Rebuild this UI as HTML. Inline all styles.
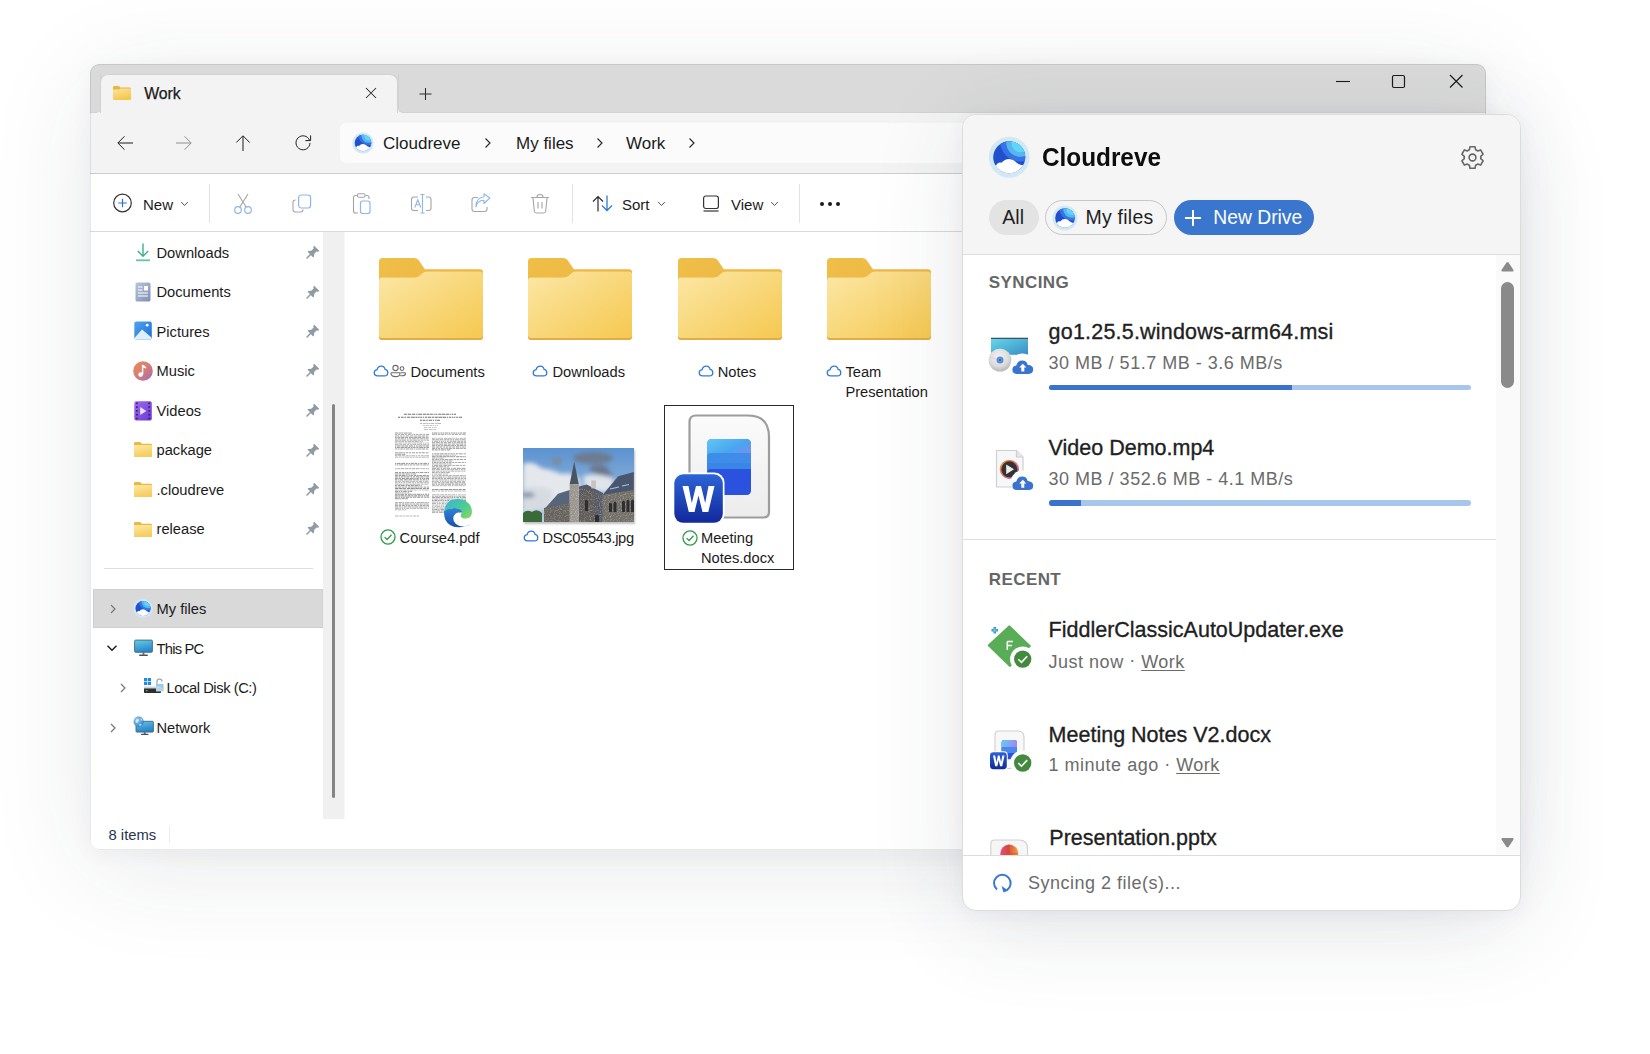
<!DOCTYPE html>
<html><head><meta charset="utf-8">
<style>
*{box-sizing:border-box;margin:0;padding:0}
html,body{width:1650px;height:1054px;overflow:hidden;background:#fff;font-family:"Liberation Sans",sans-serif;color:#1a1a1a}
.abs{position:absolute}
#win{position:absolute;left:90px;top:64px;width:1396px;height:786px;border-radius:9px;background:#fff;overflow:hidden;
 box-shadow:0 18px 105px rgba(40,50,70,0.105),0 3px 22px rgba(40,50,70,0.045)}
#titlebar{position:absolute;left:0;top:0;width:100%;height:49px;background:#f3f3f3}
#tb1{position:absolute;left:0;top:0;width:100%;height:24px;background:#dadada}
#tb2{position:absolute;left:0;top:10px;width:11px;height:39px;background:#dadada;border-bottom-right-radius:5px;border-right:1px solid #d2d2d2;border-bottom:1px solid #d2d2d2}
#tb3{position:absolute;left:307.5px;top:10px;width:1088.5px;height:39px;background:#dadada;border-bottom-left-radius:5px;border-left:1px solid #d2d2d2;border-bottom:1px solid #d2d2d2}
#tab{position:absolute;left:10px;top:10px;width:298px;height:50px;background:#f3f3f3;border-radius:8px 8px 0 0;border:1px solid #d2d2d2;border-bottom:none}
#tabfill{position:absolute;left:11px;top:40px;width:296px;height:20px;background:#f3f3f3}
#navrow{position:absolute;left:0;top:49px;width:100%;height:61px;background:#f3f3f3;border-bottom:1px solid #cdcdcd}
#addr{position:absolute;left:250px;top:10px;width:900px;height:40px;background:#fbfbfb;border-radius:6px}
#cmd{position:absolute;left:0;top:110px;width:100%;height:58px;background:#fff;border-bottom:1px solid #d9d9d9}
#side{position:absolute;left:0;top:168px;width:253px;height:588px;background:#fff}
#content{position:absolute;left:253px;top:168px;width:1142px;height:588px;background:#fff}
#status{position:absolute;left:0;top:756px;width:100%;height:30px;background:#fff}
#panel{position:absolute;left:962px;top:114px;width:559px;height:797px;border-radius:14px;background:#fff;overflow:hidden;
 border:1px solid #dcdcdc;box-shadow:0 14px 95px rgba(40,50,70,0.12),0 2px 18px rgba(40,50,70,0.05)}
.t{position:absolute;white-space:nowrap}
</style></head><body>
<div id="win">
  <div id="titlebar"></div><div id="tb1"></div><div id="tb2"></div><div id="tb3"></div>
  <div id="tab"></div><div id="tabfill"></div>
  <div id="navrow"><div id="addr"></div></div>
  <div id="cmd"></div>
  <div id="side"></div>
  <div id="content"></div>
  <div id="status"></div>
  <div style="position:absolute;left:0;top:0;right:0;bottom:0;border:1px solid rgba(0,0,0,0.085);border-radius:9px"></div>
</div>

<div id="ov" style="position:absolute;left:0;top:0;width:1650px;height:1054px">
<!-- tab -->
<svg class="abs" style="left:112px;top:85px" width="20" height="16" viewBox="0 0 20 16"><defs><linearGradient id="gtabf" x1="0" y1="0" x2="0.4" y2="1"><stop offset="0" stop-color="#fbe5a0"/><stop offset="1" stop-color="#f4c84f"/></linearGradient></defs>
 <path d="M1 2.4 Q1 1 2.4 1 H6.4 Q7.2 1 7.8 1.8 L8.4 2.6 H17.6 Q19 2.6 19 4 V13.6 Q19 15 17.6 15 H2.4 Q1 15 1 13.6 Z" fill="#ebb63c"/>
 <path d="M1 5.6 Q1 4.4 2.2 4.4 H6.8 Q7.6 4.4 8.3 3.7 L8.6 3.4 H17.8 Q19 3.4 19 4.6 V13.6 Q19 15 17.6 15 H2.4 Q1 15 1 13.6 Z" fill="url(#gtabf)"/>
</svg>
<div class="t" style="left:144.2px;top:86.4px;font-size:15.8px;line-height:15.8px;color:#1b1b1b;-webkit-text-stroke:0.25px #1b1b1b">Work</div>
<svg class="abs" style="left:364.3px;top:86.2px" width="14" height="14" viewBox="0 0 14 14"><path d="M2 2 L12 12 M12 2 L2 12" stroke="#2b2b2b" stroke-width="1.05"/></svg>
<svg class="abs" style="left:418.2px;top:87.2px" width="15" height="14" viewBox="0 0 15 14"><path d="M7.5 1 V13 M1.5 7 H13.5" stroke="#2b2b2b" stroke-width="1.05"/></svg>
<!-- window controls -->
<svg class="abs" style="left:1334.5px;top:73.5px" width="16" height="16" viewBox="0 0 16 16"><path d="M1 7.5 H15" stroke="#1b1b1b" stroke-width="1.1"/></svg>
<svg class="abs" style="left:1390px;top:73.2px" width="16" height="16" viewBox="0 0 16 16"><rect x="2.5" y="2.5" width="12" height="12" rx="1.5" fill="none" stroke="#1b1b1b" stroke-width="1.2"/></svg>
<svg class="abs" style="left:1448px;top:73.3px" width="16" height="16" viewBox="0 0 16 16"><path d="M2 2 L14.5 14.5 M14.5 2 L2 14.5" stroke="#1b1b1b" stroke-width="1.2"/></svg>
<!-- nav -->
<svg class="abs" style="left:114.5px;top:132.5px" width="20" height="20" viewBox="0 0 20 20"><path d="M18 10 H3 M9.5 3.3 L2.8 10 L9.5 16.7" fill="none" stroke="#1e1e1e" stroke-width="1.0"/></svg>
<svg class="abs" style="left:174px;top:132.5px" width="20" height="20" viewBox="0 0 20 20"><path d="M2 10 H17 M10.5 3.3 L17.2 10 L10.5 16.7" fill="none" stroke="#8e8e8e" stroke-width="1.0"/></svg>
<svg class="abs" style="left:232.5px;top:132.5px" width="20" height="20" viewBox="0 0 20 20"><path d="M10 18 V3 M3.3 9.5 L10 2.8 L16.7 9.5" fill="none" stroke="#1e1e1e" stroke-width="1.0"/></svg>
<svg class="abs" style="left:292.5px;top:132.3px" width="20" height="20" viewBox="0 0 20 20"><path d="M16.5 8.2 A7 7 0 1 0 17 11" fill="none" stroke="#1e1e1e" stroke-width="1.0"/><path d="M17.6 3.4 V8.6 H12.4" fill="none" stroke="#1e1e1e" stroke-width="1.0"/></svg>
<!-- address -->
<svg class="abs" style="left:352px;top:132px" width="22" height="22" viewBox="0 0 22 22" id="logoaddr"><use href="#cdlogo"/></svg>
<div class="t" style="left:383px;top:135px;font-size:17px;line-height:17px;color:#1b1b1b">Cloudreve</div>
<svg class="abs" style="left:482px;top:136px" width="12" height="14" viewBox="0 0 12 14"><path d="M3.5 2.5 L8 7 L3.5 11.5" fill="none" stroke="#2b2b2b" stroke-width="1.2"/></svg>
<div class="t" style="left:516px;top:135px;font-size:17px;line-height:17px;color:#1b1b1b">My files</div>
<svg class="abs" style="left:594px;top:136px" width="12" height="14" viewBox="0 0 12 14"><path d="M3.5 2.5 L8 7 L3.5 11.5" fill="none" stroke="#2b2b2b" stroke-width="1.2"/></svg>
<div class="t" style="left:626px;top:135px;font-size:17px;line-height:17px;color:#1b1b1b">Work</div>
<svg class="abs" style="left:686px;top:136px" width="12" height="14" viewBox="0 0 12 14"><path d="M3.5 2.5 L8 7 L3.5 11.5" fill="none" stroke="#2b2b2b" stroke-width="1.2"/></svg>
<!-- command bar -->
<svg class="abs" style="left:112px;top:193px" width="21" height="21" viewBox="0 0 21 21"><circle cx="10.5" cy="10" r="8.8" fill="none" stroke="#333" stroke-width="1.2"/><path d="M10.5 5.8 V14.2 M6.3 10 H14.7" stroke="#2f6fd0" stroke-width="1.2"/></svg>
<div class="t" style="left:143px;top:197px;font-size:15px;line-height:15px;color:#1b1b1b">New</div>
<svg class="abs" style="left:180px;top:200px" width="9" height="8" viewBox="0 0 9 8"><path d="M1.2 2 L4.5 5.5 L7.8 2" fill="none" stroke="#555" stroke-width="1"/></svg>
<div class="abs" style="left:209px;top:184px;width:1px;height:39px;background:#e3e3e3"></div>
<!-- scissors -->
<svg class="abs" style="left:232px;top:192px" width="22" height="23" viewBox="0 0 22 23"><path d="M6 2 L14.5 15.5 M16 2 L7.5 15.5" stroke="#a5a5a5" stroke-width="1.1" fill="none"/><circle cx="6" cy="18" r="3.3" fill="none" stroke="#8fb6e8" stroke-width="1.2"/><circle cx="16" cy="18" r="3.3" fill="none" stroke="#8fb6e8" stroke-width="1.2"/></svg>
<!-- copy -->
<svg class="abs" style="left:291px;top:193px" width="22" height="21" viewBox="0 0 22 21"><path d="M4.5 7 Q2 7 2 9.5 V16.5 Q2 19 4.5 19 H9.5 Q12 19 12 16.5" fill="none" stroke="#a5a5a5" stroke-width="1.1"/><rect x="7.6" y="2" width="12" height="13" rx="2.8" fill="none" stroke="#8fb6e8" stroke-width="1.2"/></svg>
<!-- paste -->
<svg class="abs" style="left:351px;top:192px" width="22" height="23" viewBox="0 0 22 23"><path d="M6 3.5 H4.5 Q2.5 3.5 2.5 5.5 V19 Q2.5 21 4.5 21 H7" fill="none" stroke="#a5a5a5" stroke-width="1.1"/><path d="M14.5 3.5 H16 Q18 3.5 18 5.5 V7" fill="none" stroke="#a5a5a5" stroke-width="1.1"/><rect x="6.5" y="1.8" width="7.5" height="3.4" rx="1.2" fill="none" stroke="#a5a5a5" stroke-width="1.1"/><rect x="9.5" y="9" width="9.5" height="12.5" rx="2.2" fill="none" stroke="#8fb6e8" stroke-width="1.2"/></svg>
<!-- rename -->
<svg class="abs" style="left:410px;top:192px" width="23" height="23" viewBox="0 0 23 23"><path d="M8 5 H4 Q1.5 5 1.5 7.5 V16 Q1.5 18.5 4 18.5 H8 M16 5 H18.5 Q21 5 21 7.5 V16 Q21 18.5 18.5 18.5 H16" fill="none" stroke="#a5a5a5" stroke-width="1.1"/><path d="M4.8 15.5 L7.8 7.8 L10.8 15.5 M5.8 12.8 H9.8" fill="none" stroke="#8fb6e8" stroke-width="1.1"/><path d="M12.5 2.5 V21 M10.5 2.5 H14.5 M10.5 21 H14.5" fill="none" stroke="#8fb6e8" stroke-width="1.1"/></svg>
<!-- share -->
<svg class="abs" style="left:470px;top:192px" width="22" height="22" viewBox="0 0 22 22"><path d="M8 5.5 H4.5 Q2 5.5 2 8 V17 Q2 19.5 4.5 19.5 H14.5 Q17 19.5 17 17 V15" fill="none" stroke="#a5a5a5" stroke-width="1.1"/><path d="M6 15 Q7 8.5 14 8.3 V11.5 L19.8 6 L14 1.8 V4.8 Q6 5.5 6 15 Z" fill="none" stroke="#8fb6e8" stroke-width="1.1" stroke-linejoin="round"/></svg>
<!-- trash -->
<svg class="abs" style="left:529px;top:192px" width="22" height="23" viewBox="0 0 22 23"><path d="M2 5.5 H20 M8 5 Q8 2.5 11 2.5 Q14 2.5 14 5 M4 6 L5.3 19 Q5.6 21 7.5 21 H14.5 Q16.4 21 16.7 19 L18 6 M9 10 V16.5 M13 10 V16.5" fill="none" stroke="#a5a5a5" stroke-width="1.1"/></svg>
<div class="abs" style="left:572px;top:184px;width:1px;height:39px;background:#e3e3e3"></div>
<!-- sort -->
<svg class="abs" style="left:591px;top:194px" width="23" height="19" viewBox="0 0 23 19"><path d="M7 17.5 V2.5 M2 7.5 L7 2.5 L12 7.5" fill="none" stroke="#2b2b2b" stroke-width="1.2"/><path d="M16 1.5 V16.5 M11 11.5 L16 16.5 L21 11.5" fill="none" stroke="#2f78d8" stroke-width="1.3"/></svg>
<div class="t" style="left:622px;top:197px;font-size:15px;line-height:15px;color:#1b1b1b">Sort</div>
<svg class="abs" style="left:657px;top:200px" width="9" height="8" viewBox="0 0 9 8"><path d="M1.2 2 L4.5 5.5 L7.8 2" fill="none" stroke="#555" stroke-width="1"/></svg>
<!-- view -->
<svg class="abs" style="left:702px;top:194px" width="18" height="19" viewBox="0 0 18 19"><rect x="1.6" y="2" width="14.8" height="12.5" rx="2.2" fill="none" stroke="#333" stroke-width="1.2"/><path d="M1.5 17 H16.5" stroke="#333" stroke-width="1.2"/></svg>
<div class="t" style="left:731px;top:197px;font-size:15px;line-height:15px;color:#1b1b1b">View</div>
<svg class="abs" style="left:770px;top:200px" width="9" height="8" viewBox="0 0 9 8"><path d="M1.2 2 L4.5 5.5 L7.8 2" fill="none" stroke="#555" stroke-width="1"/></svg>
<div class="abs" style="left:799px;top:184px;width:1px;height:39px;background:#e3e3e3"></div>
<svg class="abs" style="left:818px;top:198px" width="24" height="12" viewBox="0 0 24 12"><circle cx="4" cy="6" r="2" fill="#1b1b1b"/><circle cx="12" cy="6" r="2" fill="#1b1b1b"/><circle cx="20" cy="6" r="2" fill="#1b1b1b"/></svg>
<!-- sidebar -->
<div class="t" style="left:156.5px;top:245.6px;font-size:14.7px;line-height:14.7px;color:#1b1b1b;">Downloads</div>
<svg class="abs" style="left:306px;top:245px" width="14" height="14" viewBox="0 0 14 14"><path d="M8.2 0.8 L13.2 5.8 L12.3 6.7 L10.6 6.4 L8.3 8.7 L7.9 11.7 L7.2 12.4 L1.6 6.8 L2.3 6.1 L5.3 5.7 L7.6 3.4 L7.3 1.7 Z" fill="#8f9aa3"/><path d="M4.5 9.5 L1 13" stroke="#8f9aa3" stroke-width="1.5" stroke-linecap="round"/></svg>
<div class="t" style="left:156.5px;top:285.1px;font-size:14.7px;line-height:14.7px;color:#1b1b1b;">Documents</div>
<svg class="abs" style="left:306px;top:285px" width="14" height="14" viewBox="0 0 14 14"><path d="M8.2 0.8 L13.2 5.8 L12.3 6.7 L10.6 6.4 L8.3 8.7 L7.9 11.7 L7.2 12.4 L1.6 6.8 L2.3 6.1 L5.3 5.7 L7.6 3.4 L7.3 1.7 Z" fill="#8f9aa3"/><path d="M4.5 9.5 L1 13" stroke="#8f9aa3" stroke-width="1.5" stroke-linecap="round"/></svg>
<div class="t" style="left:156.5px;top:324.6px;font-size:14.7px;line-height:14.7px;color:#1b1b1b;">Pictures</div>
<svg class="abs" style="left:306px;top:324px" width="14" height="14" viewBox="0 0 14 14"><path d="M8.2 0.8 L13.2 5.8 L12.3 6.7 L10.6 6.4 L8.3 8.7 L7.9 11.7 L7.2 12.4 L1.6 6.8 L2.3 6.1 L5.3 5.7 L7.6 3.4 L7.3 1.7 Z" fill="#8f9aa3"/><path d="M4.5 9.5 L1 13" stroke="#8f9aa3" stroke-width="1.5" stroke-linecap="round"/></svg>
<div class="t" style="left:156.5px;top:364.1px;font-size:14.7px;line-height:14.7px;color:#1b1b1b;">Music</div>
<svg class="abs" style="left:306px;top:363px" width="14" height="14" viewBox="0 0 14 14"><path d="M8.2 0.8 L13.2 5.8 L12.3 6.7 L10.6 6.4 L8.3 8.7 L7.9 11.7 L7.2 12.4 L1.6 6.8 L2.3 6.1 L5.3 5.7 L7.6 3.4 L7.3 1.7 Z" fill="#8f9aa3"/><path d="M4.5 9.5 L1 13" stroke="#8f9aa3" stroke-width="1.5" stroke-linecap="round"/></svg>
<div class="t" style="left:156.5px;top:403.6px;font-size:14.7px;line-height:14.7px;color:#1b1b1b;">Videos</div>
<svg class="abs" style="left:306px;top:403px" width="14" height="14" viewBox="0 0 14 14"><path d="M8.2 0.8 L13.2 5.8 L12.3 6.7 L10.6 6.4 L8.3 8.7 L7.9 11.7 L7.2 12.4 L1.6 6.8 L2.3 6.1 L5.3 5.7 L7.6 3.4 L7.3 1.7 Z" fill="#8f9aa3"/><path d="M4.5 9.5 L1 13" stroke="#8f9aa3" stroke-width="1.5" stroke-linecap="round"/></svg>
<div class="t" style="left:156.5px;top:443.1px;font-size:14.7px;line-height:14.7px;color:#1b1b1b;">package</div>
<svg class="abs" style="left:306px;top:443px" width="14" height="14" viewBox="0 0 14 14"><path d="M8.2 0.8 L13.2 5.8 L12.3 6.7 L10.6 6.4 L8.3 8.7 L7.9 11.7 L7.2 12.4 L1.6 6.8 L2.3 6.1 L5.3 5.7 L7.6 3.4 L7.3 1.7 Z" fill="#8f9aa3"/><path d="M4.5 9.5 L1 13" stroke="#8f9aa3" stroke-width="1.5" stroke-linecap="round"/></svg>
<div class="t" style="left:156.5px;top:482.6px;font-size:14.7px;line-height:14.7px;color:#1b1b1b;">.cloudreve</div>
<svg class="abs" style="left:306px;top:482px" width="14" height="14" viewBox="0 0 14 14"><path d="M8.2 0.8 L13.2 5.8 L12.3 6.7 L10.6 6.4 L8.3 8.7 L7.9 11.7 L7.2 12.4 L1.6 6.8 L2.3 6.1 L5.3 5.7 L7.6 3.4 L7.3 1.7 Z" fill="#8f9aa3"/><path d="M4.5 9.5 L1 13" stroke="#8f9aa3" stroke-width="1.5" stroke-linecap="round"/></svg>
<div class="t" style="left:156.5px;top:522.1px;font-size:14.7px;line-height:14.7px;color:#1b1b1b;">release</div>
<svg class="abs" style="left:306px;top:521px" width="14" height="14" viewBox="0 0 14 14"><path d="M8.2 0.8 L13.2 5.8 L12.3 6.7 L10.6 6.4 L8.3 8.7 L7.9 11.7 L7.2 12.4 L1.6 6.8 L2.3 6.1 L5.3 5.7 L7.6 3.4 L7.3 1.7 Z" fill="#8f9aa3"/><path d="M4.5 9.5 L1 13" stroke="#8f9aa3" stroke-width="1.5" stroke-linecap="round"/></svg>
<svg class="abs" style="left:134px;top:242px" width="18" height="20" viewBox="0 0 18 20"><path d="M9 1.5 V14 M3.8 9 L9 14.2 L14.2 9" fill="none" stroke="#3fae8c" stroke-width="1.4"/><path d="M2 18.3 H16" stroke="#66c3a4" stroke-width="1.8"/></svg>
<svg class="abs" style="left:135px;top:282px" width="16" height="20" viewBox="0 0 16 20"><defs><linearGradient id="gdoc" x1="0" y1="0" x2="1" y2="1"><stop offset="0" stop-color="#b9c5dd"/><stop offset="1" stop-color="#7d8fb3"/></linearGradient></defs><rect x="0.5" y="0.5" width="15" height="19" rx="1.6" fill="url(#gdoc)"/><path d="M3 5 H7.5 M3 8 H7.5 M3 11 H13 M3 14 H13" stroke="#fff" stroke-width="1.2"/><rect x="9" y="4" width="4" height="4.5" fill="#fff"/></svg>
<svg class="abs" style="left:134px;top:321px" width="18" height="19" viewBox="0 0 18 19"><defs><linearGradient id="gpic" x1="0" y1="0" x2="1" y2="1"><stop offset="0" stop-color="#53a6ee"/><stop offset="1" stop-color="#1c6ad6"/></linearGradient></defs><rect x="0.3" y="0.5" width="17.5" height="18" rx="2" fill="url(#gpic)"/><path d="M0.5 17 L8 8.5 L17.5 16.5 V17 Q17.5 18.5 16 18.5 H2 Q0.5 18.5 0.5 17 Z" fill="#dff0fb"/><circle cx="13.2" cy="4.2" r="1.4" fill="#fff"/></svg>
<svg class="abs" style="left:133px;top:361px" width="20" height="20" viewBox="0 0 20 20"><defs><linearGradient id="gmus" x1="0" y1="0" x2="1" y2="1"><stop offset="0" stop-color="#ec8f58"/><stop offset="0.55" stop-color="#d47a7a"/><stop offset="1" stop-color="#9c6cc0"/></linearGradient></defs><circle cx="10" cy="10" r="9.8" fill="url(#gmus)"/><path d="M9.6 4 V13.5" stroke="#fff" stroke-width="1.4"/><path d="M9.6 3.6 Q12 4.5 13.3 6.5 L13 7.6 Q11.5 6.6 9.9 6.4 Z" fill="#fff"/><circle cx="7.6" cy="13.6" r="2.3" fill="#fff"/></svg>
<svg class="abs" style="left:134px;top:401px" width="18" height="20" viewBox="0 0 18 20"><defs><linearGradient id="gvid" x1="0" y1="0" x2="1" y2="1"><stop offset="0" stop-color="#9d6af0"/><stop offset="1" stop-color="#6d38cf"/></linearGradient></defs><rect x="0.3" y="0.3" width="17.5" height="19.3" rx="1.8" fill="url(#gvid)"/><g fill="#3a2372"><rect x="2" y="1.5" width="1.8" height="1.6"/><rect x="2" y="5.3" width="1.8" height="1.6"/><rect x="2" y="9.1" width="1.8" height="1.6"/><rect x="2" y="12.9" width="1.8" height="1.6"/><rect x="2" y="16.7" width="1.8" height="1.6"/><rect x="14.3" y="1.5" width="1.8" height="1.6"/><rect x="14.3" y="5.3" width="1.8" height="1.6"/><rect x="14.3" y="9.1" width="1.8" height="1.6"/><rect x="14.3" y="12.9" width="1.8" height="1.6"/><rect x="14.3" y="16.7" width="1.8" height="1.6"/></g><path d="M6.2 6 L12.3 10 L6.2 14 Z" fill="#e9e2f7"/></svg>
<svg class="abs" style="left:134px;top:442px" width="18" height="15" viewBox="0 0 18 15"><defs><linearGradient id="gsf0" x1="0" y1="0" x2="0.3" y2="1"><stop offset="0" stop-color="#fde9a6"/><stop offset="1" stop-color="#f6cd5e"/></linearGradient></defs><path d="M0 1.2 Q0 0 1.2 0 H5.5 Q6.3 0 7 0.8 L7.8 1.8 H16.8 Q18 1.8 18 3 V13.8 Q18 15 16.8 15 H1.2 Q0 15 0 13.8 Z" fill="#ebb73e"/><path d="M0 4 Q0 3 1 3 H17 Q18 3 18 4 V13.8 Q18 15 16.8 15 H1.2 Q0 15 0 13.8 Z" fill="url(#gsf0)"/></svg>
<svg class="abs" style="left:134px;top:482px" width="18" height="15" viewBox="0 0 18 15"><defs><linearGradient id="gsf1" x1="0" y1="0" x2="0.3" y2="1"><stop offset="0" stop-color="#fde9a6"/><stop offset="1" stop-color="#f6cd5e"/></linearGradient></defs><path d="M0 1.2 Q0 0 1.2 0 H5.5 Q6.3 0 7 0.8 L7.8 1.8 H16.8 Q18 1.8 18 3 V13.8 Q18 15 16.8 15 H1.2 Q0 15 0 13.8 Z" fill="#ebb73e"/><path d="M0 4 Q0 3 1 3 H17 Q18 3 18 4 V13.8 Q18 15 16.8 15 H1.2 Q0 15 0 13.8 Z" fill="url(#gsf1)"/></svg>
<svg class="abs" style="left:134px;top:522px" width="18" height="15" viewBox="0 0 18 15"><defs><linearGradient id="gsf2" x1="0" y1="0" x2="0.3" y2="1"><stop offset="0" stop-color="#fde9a6"/><stop offset="1" stop-color="#f6cd5e"/></linearGradient></defs><path d="M0 1.2 Q0 0 1.2 0 H5.5 Q6.3 0 7 0.8 L7.8 1.8 H16.8 Q18 1.8 18 3 V13.8 Q18 15 16.8 15 H1.2 Q0 15 0 13.8 Z" fill="#ebb73e"/><path d="M0 4 Q0 3 1 3 H17 Q18 3 18 4 V13.8 Q18 15 16.8 15 H1.2 Q0 15 0 13.8 Z" fill="url(#gsf2)"/></svg>
<div class="abs" style="left:104px;top:568px;width:209px;height:1px;background:#dedede"></div>
<div class="abs" style="left:93px;top:589px;width:230px;height:39px;background:#d9d9d9;border:1px solid #d0d0d0"></div>
<svg class="abs" style="left:108px;top:603px" width="10" height="12" viewBox="0 0 10 12"><path d="M3 2 L7 6 L3 10" fill="none" stroke="#777" stroke-width="1.2"/></svg>
<svg class="abs" style="left:133px;top:598px" width="20" height="21" viewBox="0 0 22 22"><use href="#cdlogo"/></svg>
<div class="t" style="left:156.5px;top:602.1px;font-size:14.7px;line-height:14.7px;color:#1b1b1b;">My files</div>
<svg class="abs" style="left:106px;top:643px" width="12" height="10" viewBox="0 0 12 10"><path d="M1.5 2.8 L6 7.3 L10.5 2.8" fill="none" stroke="#1b1b1b" stroke-width="1.4"/></svg>
<svg class="abs" style="left:134px;top:639px" width="19" height="18" viewBox="0 0 19 18"><defs><linearGradient id="gpc" x1="0" y1="0" x2="0.3" y2="1"><stop offset="0" stop-color="#62cfe6"/><stop offset="1" stop-color="#2b86cc"/></linearGradient></defs><rect x="0.6" y="1.1" width="17.8" height="12.2" rx="1" fill="url(#gpc)" stroke="#46657e" stroke-width="0.9"/><rect x="8.6" y="13.4" width="1.8" height="2.4" fill="#5a6a78"/><rect x="5.2" y="15.6" width="8.6" height="1.3" rx="0.5" fill="#46525c"/></svg>
<div class="t" style="left:156.5px;top:641.8px;font-size:14.7px;line-height:14.7px;color:#1b1b1b;letter-spacing:-0.75px">This PC</div>
<svg class="abs" style="left:118px;top:682px" width="10" height="12" viewBox="0 0 10 12"><path d="M3 2 L7 6 L3 10" fill="none" stroke="#777" stroke-width="1.2"/></svg>
<svg class="abs" style="left:143px;top:677px" width="21" height="19" viewBox="0 0 21 19"><rect x="1" y="1" width="3.2" height="3.2" fill="#1e8be0"/><rect x="4.8" y="1" width="3.2" height="3.2" fill="#1e8be0"/><rect x="1" y="4.8" width="3.2" height="3.2" fill="#1e8be0"/><rect x="4.8" y="4.8" width="3.2" height="3.2" fill="#1e8be0"/><path d="M14 7 V4.5 Q14 2 16.5 2 Q19 2 19 4.5" fill="none" stroke="#8a9bb0" stroke-width="1.1"/><rect x="13" y="7" width="7.5" height="6" fill="#8fcff2"/><rect x="1" y="10" width="17" height="6" rx="0.8" fill="#2d2d2d"/><rect x="1" y="9.5" width="17" height="2" fill="#cfd6dc"/><rect x="3" y="13" width="1.6" height="1.2" fill="#3bd15b"/><rect x="13" y="11" width="7.5" height="3.5" fill="#b9d4e6"/></svg>
<div class="t" style="left:166.5px;top:681.4px;font-size:14.7px;line-height:14.7px;color:#1b1b1b;letter-spacing:-0.42px">Local Disk (C:)</div>
<svg class="abs" style="left:108px;top:722px" width="10" height="12" viewBox="0 0 10 12"><path d="M3 2 L7 6 L3 10" fill="none" stroke="#777" stroke-width="1.2"/></svg>
<svg class="abs" style="left:133px;top:716px" width="21" height="20" viewBox="0 0 21 20"><defs><linearGradient id="gnet" x1="0" y1="0" x2="0.3" y2="1"><stop offset="0" stop-color="#5fc8e8"/><stop offset="1" stop-color="#2a82c8"/></linearGradient><radialGradient id="gglobe" cx="0.35" cy="0.35" r="0.7"><stop offset="0" stop-color="#9fd3f2"/><stop offset="1" stop-color="#2f7fc0"/></radialGradient></defs><rect x="3" y="5.3" width="17.4" height="10.8" rx="0.8" fill="url(#gnet)" stroke="#46657e" stroke-width="0.9"/><rect x="10.8" y="16.2" width="1.8" height="1.8" fill="#5a6a78"/><rect x="8" y="17.8" width="7.5" height="1.3" rx="0.5" fill="#46525c"/><circle cx="5.6" cy="5.6" r="5.1" fill="url(#gglobe)"/><path d="M2.5 4.5 Q3.5 2.2 5.5 3.2 Q6.5 4.5 5 6 Q3.8 7.5 3 6.5 Z M7.2 2 Q9.3 2.8 9.8 4.8 Q8.6 5 7.9 4 Z M6.5 8 Q8 7.5 8.8 8.8 Q7.5 10 6.2 9.6 Z" fill="#d9f0fb" opacity="0.85"/></svg>
<div class="t" style="left:156.5px;top:721.1px;font-size:14.7px;line-height:14.7px;color:#1b1b1b;">Network</div>
<div class="abs" style="left:323px;top:232px;width:21px;height:587px;background:#f0f0f0"></div>
<div class="abs" style="left:344px;top:232px;width:1px;height:587px;background:#f7f7f7"></div>
<div class="abs" style="left:332px;top:404px;width:3px;height:394px;background:#858585;border-radius:2px"></div>
<div class="t" style="left:108.5px;top:828.3px;font-size:14.8px;line-height:14.8px;color:#2a3350;">8 items</div>
<div class="abs" style="left:169px;top:826px;width:1px;height:17px;background:#ececec"></div>
<!-- content -->
<svg width="0" height="0" style="position:absolute"><defs>
<linearGradient id="gft" x1="0" y1="0" x2="1" y2="1"><stop offset="0" stop-color="#f0bf48"/><stop offset="1" stop-color="#e6b040"/></linearGradient>
<linearGradient id="gff" x1="0" y1="0" x2="1" y2="1"><stop offset="0" stop-color="#fce7a6"/><stop offset="1" stop-color="#f5c850"/></linearGradient>
<g id="bigfolder">
 <path d="M0 3.5 Q0 0 3.5 0 H35 Q38 0 39.5 2 L45 10 L46 11.3 H101 Q104 11.3 104 14.3 V78.5 Q104 82 100.5 82 H3.5 Q0 82 0 78.5 Z" fill="url(#gft)"/>
 <path d="M0 22.5 Q0 19.5 3 19.5 H35.5 Q38.5 19.5 41 17.5 L43 15.5 Q45 13.5 48 13.5 H101 Q104 13.5 104 16.5 V78.5 Q104 82 100.5 82 H3.5 Q0 82 0 78.5 Z" fill="#e2ad48"/>
 <path d="M0 22.5 Q0 19.5 3 19.5 H35.5 Q38.5 19.5 41 17.5 L43 15.5 Q45 13.5 48 13.5 H101 Q104 13.5 104 16.5 V77 Q104 80 101 80 H3 Q0 80 0 77 Z" fill="url(#gff)"/>
</g>
<g id="cloudic"><path d="M4.3 10.6 Q1 10.6 1 7.6 Q1 5 3.8 4.6 Q4.6 1.1 7.9 1.1 Q11 1.1 11.6 4.3 Q14.2 4.8 14.2 7.5 Q14.2 10.6 11 10.6 Z" fill="none" stroke="#2f78d8" stroke-width="1.25"/></g>
<g id="checkic"><circle cx="7.5" cy="7.5" r="6.6" fill="none" stroke="#2e9a45" stroke-width="1.2"/><path d="M4.3 7.6 L6.6 9.9 L10.8 5.4" fill="none" stroke="#2e9a45" stroke-width="1.2"/></g>
</defs></svg>
<svg class="abs" style="left:378.8px;top:257.7px" width="104" height="82" viewBox="0 0 104 82"><use href="#bigfolder"/></svg>
<svg class="abs" style="left:528.3px;top:257.7px" width="104" height="82" viewBox="0 0 104 82"><use href="#bigfolder"/></svg>
<svg class="abs" style="left:677.8px;top:257.7px" width="104" height="82" viewBox="0 0 104 82"><use href="#bigfolder"/></svg>
<svg class="abs" style="left:827.3px;top:257.7px" width="104" height="82" viewBox="0 0 104 82"><use href="#bigfolder"/></svg>
<svg class="abs" style="left:373.2px;top:364.5px" width="16" height="12" viewBox="0 0 15.2 11.7"><use href="#cloudic"/></svg>
<svg class="abs" style="left:390px;top:364px" width="17" height="14" viewBox="0 0 17 14"><circle cx="5.5" cy="4" r="2.6" fill="none" stroke="#6b6b6b" stroke-width="1.1"/><circle cx="12" cy="4.6" r="1.9" fill="none" stroke="#6b6b6b" stroke-width="1.1"/><path d="M1.6 8.8 H9.4 Q10 8.8 10 9.5 Q10 12.6 5.5 12.6 Q1 12.6 1 9.5 Q1 8.8 1.6 8.8 Z" fill="none" stroke="#6b6b6b" stroke-width="1.1"/><path d="M10.5 8.8 H14.8 Q15.6 8.8 15.5 9.6 Q15.2 11.8 12 11.8 Q11 11.8 10.3 11.5" fill="none" stroke="#6b6b6b" stroke-width="1.1"/></svg>
<div class="t" style="left:410.5px;top:364.7px;font-size:14.7px;line-height:14.7px;color:#1b1b1b;">Documents</div>
<svg class="abs" style="left:532.3px;top:364.5px" width="16" height="12" viewBox="0 0 15.2 11.7"><use href="#cloudic"/></svg>
<div class="t" style="left:552.4px;top:364.7px;font-size:14.7px;line-height:14.7px;color:#1b1b1b;">Downloads</div>
<svg class="abs" style="left:698.3px;top:364.5px" width="16" height="12" viewBox="0 0 15.2 11.7"><use href="#cloudic"/></svg>
<div class="t" style="left:717.7px;top:365.2px;font-size:14.7px;line-height:14.7px;color:#1b1b1b;">Notes</div>
<svg class="abs" style="left:825.6px;top:364.5px" width="16" height="12" viewBox="0 0 15.2 11.7"><use href="#cloudic"/></svg>
<div class="t" style="left:845.4px;top:365.2px;font-size:14.7px;line-height:14.7px;color:#1b1b1b;">Team</div>
<div class="t" style="left:845.4px;top:385.1px;font-size:14.7px;line-height:14.7px;color:#1b1b1b;">Presentation</div>
<svg class="abs" style="left:394px;top:412px" width="73" height="110" viewBox="0 0 73 110"><rect width="73" height="110" fill="#fff"/><path d="M10 2.3 H62.0" stroke="#707070" stroke-width="1.05" stroke-dasharray="2.9 0.8 3.4 0.9 3.3 0.9 1.3 0.7 3.8 0.8 3.7 0.5 2.5 0.6 2.7 0.7 1.2 0.6 2.0 0.9 3.3 0.6 3.4 0.6 2.9 0.6 1.2 0.8 1.8 0.6 4.0 0.8"/><path d="M4 5.3 H68.0" stroke="#707070" stroke-width="1.05" stroke-dasharray="2.0 0.9 2.7 0.8 1.8 0.9 3.1 0.9 3.7 0.6 2.2 0.6 1.6 0.5 2.0 0.7 1.2 0.8 2.1 0.6 3.5 0.7 2.1 0.7 3.2 0.5 3.9 0.5 3.3 0.8 1.3 0.8 2.2 0.7 1.2 0.5 1.7 0.9 1.8 0.8 3.8 0.9"/><path d="M26 8.3 H46.0" stroke="#707070" stroke-width="1.05" stroke-dasharray="2.2 0.6 2.7 0.8 1.5 0.8 3.4 0.8 1.3 0.9 1.5 0.6 2.9 0.9"/><path d="M26 11.5 H47.0" stroke="#999" stroke-width="0.7" stroke-dasharray="2.2 0.9 2.7 0.6 2.1 0.6 1.4 0.6 3.1 0.9 1.7 0.5 4.0 0.7"/><path d="M29 13.5 H44.0" stroke="#aaa" stroke-width="0.7" stroke-dasharray="2.3 0.6 2.9 0.8 2.5 0.7 1.4 0.9 1.3 0.7 3.5 0.6"/><path d="M30 15.5 H43.0" stroke="#aaa" stroke-width="0.7" stroke-dasharray="3.2 0.9 3.0 0.8 1.5 0.7 1.6 0.8 2.0 0.7"/><path d="M30 17.5 H43.0" stroke="#aaa" stroke-width="0.7" stroke-dasharray="4.0 0.8 3.9 0.7 2.6 0.8 2.5 0.6"/><path d="M1 21.0 H18.2" stroke="#7d7d7d" stroke-width="0.75" stroke-dasharray="3.0 0.7 2.1 0.5 2.0 0.8 3.6 0.6 3.4 0.8"/><path d="M1 22.4 H35.0" stroke="#8c8c8c" stroke-width="0.75" stroke-dasharray="2.2 0.8 2.0 0.7 3.4 0.8 2.0 0.9 3.0 0.7 1.2 0.7 1.9 0.8 2.5 0.8 3.0 0.8 2.2 0.8 3.3 0.8"/><path d="M1 23.9 H35.0" stroke="#9b9b9b" stroke-width="0.75" stroke-dasharray="3.9 0.9 2.7 0.7 1.7 0.8 3.8 0.7 3.1 0.8 3.2 0.6 3.4 0.7 3.1 0.7 2.9 0.8"/><path d="M1 25.3 H35.0" stroke="#6e6e6e" stroke-width="0.75" stroke-dasharray="1.7 0.7 2.9 0.6 3.3 0.6 3.2 0.9 3.9 0.6 3.7 0.5 3.9 0.7 2.7 0.7 2.2 0.8 1.4 0.6"/><path d="M1 26.8 H35.0" stroke="#8c8c8c" stroke-width="0.75" stroke-dasharray="2.3 0.6 2.3 0.5 3.5 0.6 1.3 0.7 1.5 0.7 2.2 0.7 3.9 0.8 2.4 0.8 3.0 0.6 1.6 0.7 2.8 0.9"/><path d="M1 28.2 H35.0" stroke="#8c8c8c" stroke-width="0.75" stroke-dasharray="3.5 0.8 2.3 0.6 3.8 0.7 2.1 0.9 2.8 0.7 3.9 0.7 2.5 0.8 2.3 0.8 1.6 0.7 3.3 0.6"/><path d="M1 29.7 H28.9" stroke="#8c8c8c" stroke-width="0.75" stroke-dasharray="2.6 0.6 2.5 0.5 2.9 0.7 2.0 0.8 3.5 0.5 2.7 0.6 3.8 0.8 1.9 0.6 1.6 0.9"/><path d="M1 31.1 H35.0" stroke="#9b9b9b" stroke-width="0.75" stroke-dasharray="2.7 0.8 3.7 0.9 1.2 0.6 2.0 0.8 2.9 0.8 1.3 0.6 3.1 0.8 1.6 0.5 2.7 0.8 1.5 0.8 1.7 0.7 3.5 0.7"/><path d="M1 32.6 H35.0" stroke="#9b9b9b" stroke-width="0.75" stroke-dasharray="3.6 0.8 2.5 0.8 3.2 0.9 2.5 0.8 2.1 0.5 3.4 0.7 3.0 0.7 2.1 0.6 3.1 0.9 3.9 0.7"/><path d="M1 34.0 H35.0" stroke="#6e6e6e" stroke-width="0.75" stroke-dasharray="1.4 0.6 3.5 0.8 3.1 0.5 3.2 0.9 4.0 0.8 1.3 0.8 1.8 0.8 3.9 0.8 1.6 0.6 3.8 0.6"/><path d="M1 35.5 H35.0" stroke="#7d7d7d" stroke-width="0.75" stroke-dasharray="1.4 0.6 2.8 0.8 3.3 0.6 2.8 0.5 2.3 0.7 1.2 0.5 3.1 0.7 2.2 0.8 3.8 0.6 2.0 0.7 3.1 0.6"/><path d="M1 37.0 H35.0" stroke="#7d7d7d" stroke-width="0.75" stroke-dasharray="1.9 0.7 1.9 0.8 2.6 0.6 1.9 0.6 3.3 0.6 3.2 0.8 1.4 0.8 1.5 0.5 2.9 0.6 3.7 0.7 2.1 0.8 1.3 0.8"/><path d="M1 40.8 H35.0" stroke="#7d7d7d" stroke-width="0.75" stroke-dasharray="3.3 0.5 3.8 0.7 1.8 0.8 2.3 0.8 2.0 0.9 3.2 0.8 2.3 0.8 2.2 0.6 3.0 0.9 2.2 0.5 4.0 0.6"/><path d="M1 42.3 H11.9" stroke="#7d7d7d" stroke-width="0.75" stroke-dasharray="1.8 0.5 3.7 0.7 3.3 0.5 2.5 0.9"/><path d="M1 43.7 H35.0" stroke="#9b9b9b" stroke-width="0.75" stroke-dasharray="2.5 0.6 3.0 0.5 3.6 0.8 2.5 0.7 1.5 0.8 3.3 0.8 1.3 0.9 2.2 0.8 2.1 0.5 1.3 0.7 3.6 0.6"/><path d="M1 45.2 H35.0" stroke="#9b9b9b" stroke-width="0.75" stroke-dasharray="3.1 0.8 1.7 0.6 1.3 0.6 1.4 0.7 3.9 0.6 2.1 0.7 2.0 0.8 3.2 0.6 1.9 0.8 3.8 0.8 2.4 0.9"/><path d="M1 51.4 H35.0" stroke="#6e6e6e" stroke-width="0.75" stroke-dasharray="1.3 0.8 3.5 0.7 3.8 0.8 1.9 0.8 1.5 0.7 3.1 0.8 2.6 0.8 1.3 0.8 2.4 0.8 3.7 0.9 1.7 0.8"/><path d="M1 52.9 H35.0" stroke="#7d7d7d" stroke-width="0.75" stroke-dasharray="1.4 0.6 1.5 0.7 3.8 0.7 3.6 0.6 1.2 0.7 2.6 0.7 2.3 0.8 3.2 0.9 2.1 0.7 3.5 0.6 1.5 0.6"/><path d="M1 56.7 H35.0" stroke="#8c8c8c" stroke-width="0.75" stroke-dasharray="1.6 0.7 2.5 0.8 3.4 0.9 3.1 0.6 2.6 0.6 3.2 0.8 3.7 0.9 1.4 0.8 2.3 0.8 1.2 0.6 3.8 0.6"/><path d="M1 60.6 H35.0" stroke="#6e6e6e" stroke-width="0.75" stroke-dasharray="3.2 0.8 1.9 0.8 2.3 0.6 1.4 0.6 1.9 0.8 2.0 0.5 3.3 0.7 1.3 0.5 1.6 0.6 3.6 0.9 2.9 0.6 2.4 0.6"/><path d="M1 62.0 H22.1" stroke="#7d7d7d" stroke-width="0.75" stroke-dasharray="3.2 0.5 2.7 0.6 3.2 0.7 3.8 0.8 1.5 0.6 3.8 0.7"/><path d="M1 63.5 H35.0" stroke="#7d7d7d" stroke-width="0.75" stroke-dasharray="2.7 0.9 2.9 0.5 3.5 0.7 1.3 0.9 1.3 0.7 2.5 0.9 2.3 0.6 2.0 0.6 2.8 0.6 3.3 0.6 2.2 0.6"/><path d="M1 64.9 H35.0" stroke="#6e6e6e" stroke-width="0.75" stroke-dasharray="2.9 0.7 1.6 0.8 2.6 0.5 1.7 0.5 3.2 0.9 1.8 0.8 2.1 0.8 3.6 0.7 3.4 0.7 1.2 0.7 2.8 0.6"/><path d="M1 66.4 H35.0" stroke="#6e6e6e" stroke-width="0.75" stroke-dasharray="2.9 0.7 2.6 0.7 3.1 0.7 3.4 0.7 3.8 0.7 1.4 0.6 2.4 0.9 1.3 0.8 1.8 0.6 1.3 0.8 2.9 0.8"/><path d="M1 67.8 H35.0" stroke="#6e6e6e" stroke-width="0.75" stroke-dasharray="2.0 0.8 1.4 0.8 3.1 0.9 3.7 0.8 3.5 0.8 2.9 0.6 2.6 0.9 1.9 0.9 2.7 0.7 1.2 0.7 1.7 0.8"/><path d="M1 69.3 H35.0" stroke="#8c8c8c" stroke-width="0.75" stroke-dasharray="2.3 0.5 3.1 0.7 3.2 0.6 3.7 0.6 2.1 0.6 2.9 0.9 1.7 0.8 3.3 0.6 1.4 0.7 3.5 0.9"/><path d="M1 70.7 H35.0" stroke="#9b9b9b" stroke-width="0.75" stroke-dasharray="2.6 0.7 1.9 0.7 1.4 0.9 2.1 0.7 1.6 0.6 2.8 0.7 2.4 0.6 1.5 0.8 2.1 0.5 3.9 0.6 2.7 0.5 1.7 0.7"/><path d="M1 72.2 H35.0" stroke="#9b9b9b" stroke-width="0.75" stroke-dasharray="3.6 0.5 3.1 0.5 2.1 0.6 3.3 0.7 2.4 0.6 3.4 0.6 3.7 0.7 2.8 0.8 3.6 0.6 3.5 0.6"/><path d="M1 73.6 H27.9" stroke="#6e6e6e" stroke-width="0.75" stroke-dasharray="1.9 0.9 2.5 0.5 3.9 0.9 1.6 0.5 2.3 0.6 3.3 0.7 3.8 0.8 1.2 0.8 4.0 0.8"/><path d="M1 75.1 H35.0" stroke="#7d7d7d" stroke-width="0.75" stroke-dasharray="2.0 0.7 3.2 0.8 2.8 0.6 2.1 0.8 2.7 0.5 2.4 0.6 3.1 0.5 2.0 0.5 2.5 0.9 2.7 0.7 3.8 0.5"/><path d="M1 76.5 H35.0" stroke="#6e6e6e" stroke-width="0.75" stroke-dasharray="3.5 0.6 3.5 0.5 2.8 0.9 3.6 0.5 3.9 0.6 3.4 0.5 2.7 0.9 2.9 0.8 2.5 0.5"/><path d="M1 78.0 H35.0" stroke="#9b9b9b" stroke-width="0.75" stroke-dasharray="3.6 0.9 3.1 0.7 2.8 0.6 2.4 0.8 3.5 0.8 2.4 0.9 1.2 0.8 1.7 0.6 2.0 0.6 3.5 0.5 2.2 0.7"/><path d="M1 79.4 H18.0" stroke="#6e6e6e" stroke-width="0.75" stroke-dasharray="3.1 0.5 1.7 0.7 1.4 0.7 3.7 0.9 1.8 0.5 3.5 0.9"/><path d="M1 80.9 H15.6" stroke="#8c8c8c" stroke-width="0.75" stroke-dasharray="3.8 0.5 1.7 0.7 1.9 0.8 2.2 0.8 1.6 0.7"/><path d="M1 82.3 H35.0" stroke="#6e6e6e" stroke-width="0.75" stroke-dasharray="2.0 0.5 2.3 0.6 3.7 0.7 2.4 0.8 3.9 0.6 1.2 0.5 2.3 0.6 3.1 0.5 1.2 0.6 1.9 0.8 1.9 0.6 3.5 0.6"/><path d="M1 83.8 H35.0" stroke="#6e6e6e" stroke-width="0.75" stroke-dasharray="2.8 0.7 1.5 0.5 3.7 0.7 2.0 0.7 2.9 0.7 2.3 0.8 2.9 0.8 3.0 0.5 1.8 0.7 1.5 0.7 3.5 0.6"/><path d="M1 85.2 H35.0" stroke="#6e6e6e" stroke-width="0.75" stroke-dasharray="2.6 0.7 1.8 0.7 1.4 0.5 2.2 0.6 3.9 0.6 2.0 0.8 3.3 0.6 3.5 0.8 2.3 0.8 1.9 0.6 3.7 0.7"/><path d="M1 86.7 H13.8" stroke="#6e6e6e" stroke-width="0.75" stroke-dasharray="3.7 0.6 1.5 0.7 3.1 0.7 3.1 0.8"/><path d="M1 90.5 H35.0" stroke="#9b9b9b" stroke-width="0.75" stroke-dasharray="2.9 0.6 3.9 0.5 1.4 0.8 1.5 0.5 2.5 0.8 3.7 0.8 1.4 0.8 3.6 0.5 3.3 0.6 2.0 0.5 3.3 0.7"/><path d="M1 92.0 H35.0" stroke="#7d7d7d" stroke-width="0.75" stroke-dasharray="3.0 0.9 2.1 0.7 2.5 0.6 4.0 0.8 2.4 0.7 2.3 0.6 3.8 0.6 2.6 0.9 2.2 0.5 2.4 0.7"/><path d="M1 93.4 H35.0" stroke="#7d7d7d" stroke-width="0.75" stroke-dasharray="2.8 0.8 2.4 0.8 3.5 0.6 1.5 0.6 2.2 0.9 1.9 0.8 3.0 0.9 1.5 0.8 2.1 0.5 3.0 0.8 2.8 0.5"/><path d="M1 94.9 H35.0" stroke="#8c8c8c" stroke-width="0.75" stroke-dasharray="3.2 0.6 2.3 0.6 1.5 0.5 3.2 0.7 3.6 0.5 2.0 0.6 3.8 0.8 3.7 0.7 1.5 0.7 1.8 0.5 2.8 0.6"/><path d="M1 96.3 H35.0" stroke="#8c8c8c" stroke-width="0.75" stroke-dasharray="3.8 0.7 1.5 0.8 1.5 0.7 1.4 0.9 2.7 0.7 2.0 0.7 3.9 0.7 1.8 0.7 3.8 0.7 3.0 0.9 2.1 0.8"/><path d="M1 97.8 H12.2" stroke="#9b9b9b" stroke-width="0.75" stroke-dasharray="2.1 0.7 3.4 0.8 1.9 0.6 3.0 0.7"/><path d="M38 21.0 H72.0" stroke="#6e6e6e" stroke-width="0.75" stroke-dasharray="1.6 0.6 3.1 0.8 1.5 0.9 1.6 0.6 1.5 0.7 2.9 0.8 1.7 0.8 1.5 0.7 1.9 0.6 1.3 0.8 1.5 0.8 2.1 0.7 3.0 0.7"/><path d="M38 22.4 H72.0" stroke="#8c8c8c" stroke-width="0.75" stroke-dasharray="2.9 0.5 2.0 0.7 2.0 0.6 3.4 0.6 1.7 0.9 1.3 0.7 1.6 0.9 2.4 0.6 3.5 0.7 2.5 0.9 2.7 0.6 3.1 0.8"/><path d="M38 26.3 H72.0" stroke="#9b9b9b" stroke-width="0.75" stroke-dasharray="3.4 0.8 1.3 0.7 2.5 0.5 1.8 0.9 3.6 0.6 3.5 0.8 2.3 0.8 1.8 0.6 1.2 0.8 2.8 0.8 2.6 0.7"/><path d="M38 27.7 H72.0" stroke="#8c8c8c" stroke-width="0.75" stroke-dasharray="2.8 0.7 3.5 0.8 3.2 0.9 2.7 0.5 2.4 0.7 1.7 0.6 1.7 0.9 3.7 0.7 2.0 0.5 3.4 0.8"/><path d="M38 29.2 H72.0" stroke="#7d7d7d" stroke-width="0.75" stroke-dasharray="1.3 0.9 4.0 0.6 1.4 0.6 1.5 0.6 1.4 0.6 1.2 0.7 2.0 0.8 2.3 0.6 3.9 0.9 3.1 0.6 2.3 0.7 2.3 0.5"/><path d="M38 30.6 H72.0" stroke="#8c8c8c" stroke-width="0.75" stroke-dasharray="3.3 0.8 3.8 0.8 2.4 0.8 3.0 0.9 3.2 0.7 1.7 0.6 1.9 0.8 3.4 0.6 2.7 0.8 2.2 0.5"/><path d="M38 32.1 H72.0" stroke="#7d7d7d" stroke-width="0.75" stroke-dasharray="3.0 0.6 2.7 0.8 3.9 0.8 3.2 0.7 3.5 0.9 3.2 0.9 2.6 0.6 4.0 0.8 2.2 0.9"/><path d="M38 33.5 H72.0" stroke="#8c8c8c" stroke-width="0.75" stroke-dasharray="2.9 0.7 1.7 0.7 2.4 0.8 1.8 0.6 3.5 0.5 2.7 0.6 3.1 0.7 1.5 0.8 2.3 0.6 3.6 0.8 2.1 0.8"/><path d="M38 35.0 H72.0" stroke="#6e6e6e" stroke-width="0.75" stroke-dasharray="3.3 0.8 3.1 0.5 2.6 0.9 1.8 0.6 2.4 0.7 2.8 0.9 2.6 0.9 3.5 0.7 1.4 0.7 2.4 0.6 3.0 0.7"/><path d="M38 36.5 H72.0" stroke="#8c8c8c" stroke-width="0.75" stroke-dasharray="3.1 0.7 1.5 0.8 2.1 0.8 2.5 0.8 1.4 0.6 2.0 0.6 3.5 0.7 2.2 0.7 3.6 0.7 2.5 0.8 2.9 0.7"/><path d="M38 37.9 H56.4" stroke="#6e6e6e" stroke-width="0.75" stroke-dasharray="2.1 0.6 2.9 0.7 1.7 0.7 3.3 0.5 1.5 0.8 3.7 0.5"/><path d="M38 41.8 H72.0" stroke="#7d7d7d" stroke-width="0.75" stroke-dasharray="1.3 0.7 1.7 0.6 3.1 0.7 3.6 0.8 2.9 0.8 1.7 0.7 2.1 0.7 1.5 0.9 2.2 0.8 3.8 0.9 2.3 0.8"/><path d="M38 43.2 H62.2" stroke="#9b9b9b" stroke-width="0.75" stroke-dasharray="2.2 0.6 4.0 0.5 3.1 0.6 1.7 0.6 3.8 0.7 1.5 0.7 1.7 0.6 2.3 0.8"/><path d="M38 44.7 H72.0" stroke="#6e6e6e" stroke-width="0.75" stroke-dasharray="3.7 0.8 2.1 0.6 2.9 0.6 3.8 0.5 2.6 0.6 2.7 0.5 1.8 0.9 3.4 0.6 2.5 0.5 1.5 0.6 4.0 0.6"/><path d="M38 46.1 H50.3" stroke="#8c8c8c" stroke-width="0.75" stroke-dasharray="3.4 0.6 1.7 0.6 1.4 0.6 3.2 0.7 1.2 0.6"/><path d="M38 47.6 H72.0" stroke="#7d7d7d" stroke-width="0.75" stroke-dasharray="2.3 0.7 2.0 0.5 1.9 0.7 1.5 0.5 1.9 0.6 3.9 0.7 3.5 0.8 2.9 0.6 2.3 0.6 3.0 0.8 3.4 0.6"/><path d="M38 49.0 H59.1" stroke="#7d7d7d" stroke-width="0.75" stroke-dasharray="3.7 0.7 1.4 0.6 2.3 0.8 1.8 0.8 1.6 0.8 1.7 0.7 2.9 0.8 2.9 0.6"/><path d="M38 50.5 H72.0" stroke="#8c8c8c" stroke-width="0.75" stroke-dasharray="1.4 0.6 2.5 0.7 1.5 0.8 2.2 0.7 2.7 0.8 2.0 0.7 2.9 0.8 2.1 0.6 2.5 0.7 3.0 0.6 2.4 0.7 1.7 0.5"/><path d="M38 51.9 H57.5" stroke="#8c8c8c" stroke-width="0.75" stroke-dasharray="2.7 0.6 3.2 0.6 3.5 0.6 3.0 0.6 1.5 0.6 2.9 0.9"/><path d="M38 53.4 H72.0" stroke="#8c8c8c" stroke-width="0.75" stroke-dasharray="1.4 0.7 3.9 0.7 3.7 0.9 3.8 0.5 4.0 0.7 2.9 0.6 3.4 0.6 2.6 0.6 2.4 0.8"/><path d="M38 54.8 H55.4" stroke="#7d7d7d" stroke-width="0.75" stroke-dasharray="2.8 0.8 3.0 0.6 3.9 0.7 2.5 0.8 1.7 0.8"/><path d="M38 56.3 H72.0" stroke="#7d7d7d" stroke-width="0.75" stroke-dasharray="4.0 0.6 3.2 0.9 1.4 0.8 3.0 0.7 3.4 0.8 1.6 0.7 2.9 0.8 3.9 0.8 3.5 0.5 2.4 0.9"/><path d="M38 57.7 H72.0" stroke="#8c8c8c" stroke-width="0.75" stroke-dasharray="3.4 0.7 4.0 0.7 3.3 0.6 1.8 0.6 2.6 0.8 3.7 0.6 3.4 0.7 1.2 0.9 1.8 0.7 1.9 0.9"/><path d="M38 59.2 H72.0" stroke="#9b9b9b" stroke-width="0.75" stroke-dasharray="3.1 0.7 3.7 0.7 2.1 0.6 2.2 0.5 1.5 0.6 2.1 0.8 3.8 0.6 1.9 0.6 3.0 0.7 1.5 0.7 2.0 0.6"/><path d="M38 60.6 H56.4" stroke="#7d7d7d" stroke-width="0.75" stroke-dasharray="2.7 0.8 2.1 0.9 1.3 0.9 2.4 0.5 1.9 0.9 3.2 0.8"/><path d="M38 62.1 H53.9" stroke="#9b9b9b" stroke-width="0.75" stroke-dasharray="1.6 0.8 3.0 0.6 3.9 0.8 2.0 0.7 3.9 0.5"/><path d="M38 63.5 H72.0" stroke="#9b9b9b" stroke-width="0.75" stroke-dasharray="1.5 0.7 1.4 0.9 1.5 0.7 3.0 0.7 2.3 0.6 3.1 0.7 2.7 0.6 3.2 0.5 2.9 0.7 3.9 0.7 2.8 0.9"/><path d="M38 65.0 H72.0" stroke="#7d7d7d" stroke-width="0.75" stroke-dasharray="3.6 0.7 1.4 0.5 3.7 0.7 2.0 0.8 1.3 0.9 3.8 0.8 1.3 0.7 3.5 0.7 1.8 0.6 1.4 0.7 1.7 0.7 3.7 0.9"/><path d="M38 66.4 H72.0" stroke="#7d7d7d" stroke-width="0.75" stroke-dasharray="2.4 0.6 2.2 0.5 2.5 0.5 2.5 0.8 2.2 0.7 3.9 0.6 2.6 0.8 2.2 0.6 2.7 0.8 2.2 0.8 3.6 0.7"/><path d="M38 67.9 H72.0" stroke="#9b9b9b" stroke-width="0.75" stroke-dasharray="2.4 0.9 2.9 0.8 3.8 0.5 3.7 0.5 1.7 0.8 3.3 0.7 2.5 0.8 2.4 0.6 1.8 0.5 1.3 0.9 3.9 0.6"/><path d="M38 69.3 H72.0" stroke="#8c8c8c" stroke-width="0.75" stroke-dasharray="2.6 0.6 3.7 0.9 1.3 0.7 1.8 0.8 2.2 0.6 2.0 0.7 2.6 0.7 3.1 0.7 3.9 0.7 3.4 0.9 2.9 0.7"/><path d="M38 70.8 H72.0" stroke="#7d7d7d" stroke-width="0.75" stroke-dasharray="1.5 0.8 2.6 0.8 2.8 0.8 3.4 0.8 3.6 0.7 3.8 0.8 3.7 0.5 2.7 0.8 3.3 0.8"/><path d="M38 72.2 H72.0" stroke="#7d7d7d" stroke-width="0.75" stroke-dasharray="2.9 0.8 1.6 0.8 2.0 0.7 3.3 0.6 1.9 0.6 3.9 0.8 2.5 0.7 3.0 0.6 1.4 0.5 2.8 0.7 3.9 0.7"/><path d="M38 73.7 H72.0" stroke="#9b9b9b" stroke-width="0.75" stroke-dasharray="3.7 0.5 2.9 0.6 3.0 0.6 3.6 0.9 3.4 0.8 1.7 0.9 3.2 0.7 3.7 0.5 2.0 0.8 2.9 0.6"/><path d="M38 77.5 H72.0" stroke="#6e6e6e" stroke-width="0.75" stroke-dasharray="1.8 0.8 3.2 0.6 1.2 0.7 3.4 0.7 4.0 0.6 3.2 0.7 2.8 0.6 1.8 0.7 2.9 0.9 2.9 0.7"/><path d="M38 79.0 H72.0" stroke="#9b9b9b" stroke-width="0.75" stroke-dasharray="3.0 0.6 1.3 0.8 2.4 0.9 2.9 0.7 2.5 0.7 1.8 0.8 2.5 0.9 3.9 0.5 3.2 0.9 3.3 0.8"/><path d="M38 82.8 H72.0" stroke="#9b9b9b" stroke-width="0.75" stroke-dasharray="3.8 0.6 3.1 0.8 4.0 0.6 2.3 0.5 3.1 0.5 3.6 0.6 1.7 0.9 2.6 0.8 2.2 0.6 2.2 0.9"/><path d="M38 84.3 H72.0" stroke="#8c8c8c" stroke-width="0.75" stroke-dasharray="1.9 0.8 3.7 0.7 1.8 0.7 3.9 0.7 1.6 0.6 3.0 0.5 1.2 0.6 1.9 0.7 1.4 0.7 3.1 0.6 2.8 0.7 3.4 0.7"/><path d="M38 85.7 H72.0" stroke="#6e6e6e" stroke-width="0.75" stroke-dasharray="3.5 0.7 3.7 0.8 2.7 0.6 2.5 0.5 1.9 0.6 1.3 0.5 1.7 0.6 1.8 0.9 2.8 0.7 1.9 0.6 3.8 0.9"/><path d="M38 87.2 H72.0" stroke="#9b9b9b" stroke-width="0.75" stroke-dasharray="1.2 0.9 3.8 0.7 1.2 0.5 3.3 0.9 1.6 0.7 3.6 0.6 2.7 0.8 1.9 0.6 3.0 0.7 3.0 0.6 3.3 0.8"/><path d="M38 88.6 H72.0" stroke="#6e6e6e" stroke-width="0.75" stroke-dasharray="1.7 0.8 2.7 0.6 1.9 0.6 1.5 0.7 1.4 0.7 1.9 0.8 1.9 0.8 3.8 0.9 1.8 0.9 2.5 0.9 2.5 0.7 1.9 0.8"/><path d="M38 90.1 H72.0" stroke="#9b9b9b" stroke-width="0.75" stroke-dasharray="3.8 0.5 2.2 0.6 1.5 0.9 3.2 0.8 2.8 0.6 2.6 0.8 1.5 0.6 3.4 0.8 2.3 0.8 1.4 0.8 3.5 0.7"/><path d="M38 91.5 H72.0" stroke="#9b9b9b" stroke-width="0.75" stroke-dasharray="4.0 0.9 1.3 0.5 2.1 0.8 2.8 0.6 1.5 0.6 1.6 0.6 3.3 0.6 1.7 0.7 1.6 0.8 3.0 0.9 3.2 0.8 1.9 0.7"/><path d="M38 93.0 H72.0" stroke="#9b9b9b" stroke-width="0.75" stroke-dasharray="2.4 0.8 3.0 0.5 1.8 0.7 3.4 0.6 1.9 0.7 2.5 0.7 3.8 0.7 2.0 0.6 2.6 0.6 2.3 0.5 3.0 0.8"/><path d="M38 94.4 H72.0" stroke="#9b9b9b" stroke-width="0.75" stroke-dasharray="1.5 0.9 2.0 0.5 3.0 0.7 1.2 0.7 1.4 0.6 1.6 0.9 2.4 0.5 1.6 0.5 3.4 0.6 2.9 0.9 1.6 0.9 1.9 0.8 1.7 0.9"/><path d="M38 95.9 H56.1" stroke="#9b9b9b" stroke-width="0.75" stroke-dasharray="3.2 0.9 2.4 0.7 3.6 0.6 3.4 0.7 1.2 0.6 3.8 0.8"/><path d="M38 97.3 H72.0" stroke="#6e6e6e" stroke-width="0.75" stroke-dasharray="1.6 0.7 3.2 0.6 1.4 0.9 3.8 0.8 1.4 0.8 4.0 0.8 3.2 0.7 3.0 0.9 2.6 0.5 1.6 0.9 3.2 0.9"/><path d="M38 98.8 H61.0" stroke="#9b9b9b" stroke-width="0.75" stroke-dasharray="3.6 0.6 3.8 0.8 3.1 0.7 3.5 0.5 3.6 0.6 1.9 0.5"/><path d="M38 100.2 H72.0" stroke="#6e6e6e" stroke-width="0.75" stroke-dasharray="3.1 0.8 2.2 0.9 3.8 0.5 3.0 0.7 2.5 0.7 3.6 0.8 3.7 0.6 3.4 0.7 1.7 0.8 2.8 0.6"/><path d="M1 104.0 H25.0" stroke="#888" stroke-width="0.6" stroke-dasharray="3.7 0.7 3.1 0.9 2.1 0.7 2.7 0.6 2.7 0.9 3.2 0.6 3.1 0.7"/></svg>
<svg class="abs" style="left:443px;top:497.5px" width="30" height="30" viewBox="0 0 30 30"><defs><linearGradient id="ged1" x1="0" y1="0" x2="1" y2="1"><stop offset="0" stop-color="#34b3e3"/><stop offset="0.6" stop-color="#4fcf8a"/><stop offset="1" stop-color="#8fd860"/></linearGradient><linearGradient id="ged2" x1="0" y1="0" x2="0" y2="1"><stop offset="0" stop-color="#2e84d8"/><stop offset="1" stop-color="#1b4fa8"/></linearGradient></defs>
<path d="M1.2 13 Q2.5 1.5 14.5 1 Q24 0.8 28 9 Q29.5 13 28.6 16.5 Q27.5 20.5 22.5 20.5 Q17.5 20.5 17.8 17 Q18 15.2 19.6 14.2 Q16.2 9.5 9.8 10.2 Q3.5 11 1.2 13 Z" fill="url(#ged1)"/>
<path d="M1.2 13 Q3.5 11 9.8 10.2 Q16.5 9.5 19.6 14.2 Q13.5 13.5 11 17.5 Q9 21.5 12.5 25.5 Q16 29 22 28.5 Q25.5 28 27.5 26 Q23 29.5 15 29.3 Q6 29 2.5 22 Q0.6 17.8 1.2 13 Z" fill="url(#ged2)"/>
</svg>
<svg class="abs" style="left:380px;top:529px" width="16" height="16" viewBox="0 0 15 15"><use href="#checkic"/></svg>
<div class="t" style="left:399.6px;top:531.1px;font-size:14.7px;line-height:14.7px;color:#1b1b1b;">Course4.pdf</div>
<div class="abs" style="left:523px;top:448px;width:111px;height:74px;box-shadow:1px 1.5px 2px rgba(0,0,0,0.25)"></div>
<svg class="abs" style="left:523px;top:448px" width="111" height="74" viewBox="0 0 111 74"><defs>
<linearGradient id="gsky" x1="0" y1="0" x2="0" y2="1"><stop offset="0" stop-color="#5a92d0"/><stop offset="0.6" stop-color="#8fb2da"/><stop offset="1" stop-color="#b9cde3"/></linearGradient>
<filter id="blr" x="-20%" y="-20%" width="140%" height="140%"><feGaussianBlur stdDeviation="2.2"/></filter>
<filter id="noise" x="0" y="0" width="100%" height="100%"><feTurbulence type="fractalNoise" baseFrequency="0.8" numOctaves="2" seed="3"/><feColorMatrix type="matrix" values="0 0 0 0 1  0 0 0 0 1  0 0 0 0 1  0 0 0 1.6 -0.75"/><feComposite in2="SourceGraphic" operator="in"/></filter>
<clipPath id="walls"><path d="M21 74 V60 L46.7 55 V74 Z M55.8 74 V40 L80 45 V74 Z M79.3 74 V47 L110.8 41.9 V74 Z M46.7 74 V35.8 H55.8 V74 Z"/></clipPath>
</defs>
<rect width="111" height="74" fill="url(#gsky)"/>
<g filter="url(#blr)">
<path d="M0 16 Q10 12 18 20 Q30 22 38 26 Q48 24 56 30 L60 50 L20 62 L0 64 Z" fill="#e4e7ec"/>
<path d="M0 40 Q20 36 30 44 L25 62 H0 Z" fill="#d6dbe2"/>
<ellipse cx="70" cy="10" rx="20" ry="6" fill="#6d7b90"/>
<ellipse cx="76" cy="21" rx="10" ry="4" fill="#6a788c"/>
<ellipse cx="81" cy="27" rx="9" ry="4" fill="#6a788c"/>
<ellipse cx="34" cy="13" rx="5" ry="4" fill="#7a8aa0"/>
<path d="M60 28 Q72 24 90 30 L92 44 H62 Z" fill="#dfe3ea"/>
<ellipse cx="5" cy="47" rx="7" ry="3" fill="#8a96a8"/>
</g>
<path d="M21 74 V61.5 L35 45.7 L46.7 41.9 V74 Z" fill="#56647c"/>
<path d="M21 74 V60 L46.7 55 V74 Z" fill="#66625d"/>
<path d="M55.8 74 V38.5 L63.7 36.6 L80 45 V74 Z" fill="#555a66"/>
<path d="M57 74 V46 L66 41 L72 46 V74 Z" fill="#5f5b57"/>
<rect x="68.3" y="32.4" width="4.6" height="8" fill="#c4c4c0"/>
<path d="M46.7 74 V35.8 H55.8 V74 Z" fill="#9a968e"/>
<path d="M46.7 36 L51.2 13.8 L55.8 36 Z" fill="#4a5562"/>
<path d="M79.3 74 V47.2 L95.2 28.2 L110.8 24 V74 Z" fill="#4a566d"/>
<path d="M79.3 74 V47 L110.8 41.9 V74 Z" fill="#726e68"/>
<rect width="111" height="74" fill="#888" clip-path="url(#walls)" filter="url(#noise)" opacity="0.55"/>
<g fill="#2e2e30"><path d="M86 64 V56 Q87.5 53 89 56 V64 Z M90.5 64 V55 Q92 52 93.5 55 V64 Z M99 64 V54 Q100.5 51 102 54 V64 Z M103.5 64 V53 Q105 50 106.5 53 V64 Z M108 64 V53 Q109.5 50 111 53 V64 Z M62 63 V53 Q63.5 50 65 53 V63 Z M72 74 V68 Q74 65 76 68 V74 Z"/></g>
<path d="M87 41 L96 39 M99 38 L106 36.5" stroke="#9ec6e0" stroke-width="1.2"/>
<path d="M0 74 V65 Q4 61 9 64 Q14 60 19 65 V74 Z" fill="#3b6a38"/>
</svg>
<svg class="abs" style="left:522.5px;top:529.5px" width="16" height="12" viewBox="0 0 15.2 11.7"><use href="#cloudic"/></svg>
<div class="t" style="left:542.4px;top:530.6px;font-size:14.7px;line-height:14.7px;color:#1b1b1b;letter-spacing:-0.35px">DSC05543.jpg</div>
<div class="abs" style="left:664px;top:405px;width:130px;height:165px;border:1px solid #2a2a2a"></div>
<svg class="abs" style="left:672px;top:413px" width="100" height="112" viewBox="0 0 100 112"><defs>
<linearGradient id="gpage" x1="0" y1="0" x2="0" y2="1"><stop offset="0" stop-color="#fbfbfb"/><stop offset="1" stop-color="#ececec"/></linearGradient>
<linearGradient id="gblk" x1="0" y1="0" x2="1" y2="1"><stop offset="0" stop-color="#5fc8f5"/><stop offset="0.5" stop-color="#4aa4ef"/><stop offset="1" stop-color="#9a7ff0"/></linearGradient>
<linearGradient id="gblk2" x1="0" y1="0" x2="0" y2="1"><stop offset="0" stop-color="#2f6de0"/><stop offset="1" stop-color="#2c55e0"/></linearGradient>
<linearGradient id="gw" x1="0" y1="0" x2="0" y2="1"><stop offset="0" stop-color="#2d64d6"/><stop offset="1" stop-color="#12289a"/></linearGradient>
</defs>
<path d="M24 2.5 H76 Q97 2.5 97 24 V99 Q97 104.5 91.5 104.5 H23 Q17.5 104.5 17.5 99 V9 Q17.5 2.5 24 2.5 Z" fill="url(#gpage)" stroke="#9d9d9d" stroke-width="2.2"/>
<rect x="35" y="26" width="44" height="56" rx="5" fill="#2d5ce0"/>
<path d="M35 31 Q35 26 40 26 H74 Q79 26 79 31 V50 H35 Z" fill="url(#gblk)"/>
<path d="M35 44 Q35 40 39 40 H79 V64 H35 Z" fill="#3b8be8" opacity="0.9"/>
<path d="M35 60 Q35 56 39 56 H79 V77 Q79 82 74 82 H40 Q35 82 35 77 Z" fill="#2a52de"/>
<rect x="0.5" y="59.5" width="52" height="52" rx="10" fill="#fff"/>
<rect x="2.3" y="61.3" width="48.5" height="48.5" rx="9" fill="url(#gw)"/>
<path d="M10.5 73 H16.5 L19.8 90 L24 73 H29 L33.2 90 L36.5 73 H42.5 L36.3 99 H30.5 L26.5 82.5 L22.5 99 H16.8 Z" fill="#fff"/>
</svg>
<svg class="abs" style="left:681.5px;top:529.5px" width="16" height="16" viewBox="0 0 15 15"><use href="#checkic"/></svg>
<div class="t" style="left:700.9px;top:531.1px;font-size:14.7px;line-height:14.7px;color:#1b1b1b;">Meeting</div>
<div class="t" style="left:700.9px;top:550.6px;font-size:14.7px;line-height:14.7px;color:#1b1b1b;">Notes.docx</div>
</div>
<svg width="0" height="0" style="position:absolute">
 <defs>
  <g id="cdlogo">
   <circle cx="11" cy="11" r="10.6" fill="#d3e8f5"/>
   <clipPath id="lc"><circle cx="11" cy="11" r="8.3"/></clipPath>
   <g clip-path="url(#lc)">
    <rect x="0" y="0" width="22" height="22" fill="#2150cc"/>
    <circle cx="16.8" cy="2.6" r="10.6" fill="#3574e6"/>
    <circle cx="16.8" cy="3.4" r="7.4" fill="#56b7f0"/>
    <circle cx="16.8" cy="3.8" r="4.6" fill="#62d6f8"/>
    <path d="M0 15.6 L4.3 15 Q5.4 13.4 6.9 13.9 Q8.8 11.8 11 11.9 Q13.2 12 14.6 13.6 Q15.6 14.8 17.2 15 L22 15.6 V22 H0 Z" fill="#fff"/>
   </g>
  </g>
 </defs>
</svg>

<!-- panel -->
<div id="panel"></div>
<div id="pov" style="position:absolute;left:0;top:0;width:1650px;height:1054px">
<div class="abs" style="left:963px;top:115px;width:557px;height:139px;background:#f5f5f5;border-radius:13px 13px 0 0"></div>
<div class="abs" style="left:963px;top:254px;width:557px;height:1px;background:#dedede"></div>
<svg class="abs" style="left:988px;top:135.5px" width="42.5" height="42.5" viewBox="0 0 22 22"><use href="#cdlogo"/></svg>
<div class="t" style="left:1041.5px;top:144.1px;font-size:26.5px;line-height:26.5px;color:#0d0d0d;font-weight:bold;transform:scaleX(0.918);transform-origin:0 0">Cloudreve</div>
<svg class="abs" style="left:1459.5px;top:144.5px" width="25" height="25" viewBox="0 0 25 25"><path d="M9.39 4.80 L10.00 1.68 L15.00 1.68 L15.61 4.80 A8.3 8.3 0 0 1 17.61 5.96 L20.62 4.93 L23.11 9.25 L20.72 11.34 A8.3 8.3 0 0 1 20.72 13.66 L23.11 15.75 L20.62 20.07 L17.61 19.04 A8.3 8.3 0 0 1 15.61 20.20 L15.00 23.32 L10.00 23.32 L9.39 20.20 A8.3 8.3 0 0 1 7.39 19.04 L4.38 20.07 L1.89 15.75 L4.28 13.66 A8.3 8.3 0 0 1 4.28 11.34 L1.89 9.25 L4.38 4.93 L7.39 5.96 A8.3 8.3 0 0 1 9.39 4.80 Z" fill="none" stroke="#666" stroke-width="1.6" stroke-linejoin="round"/><circle cx="12.5" cy="12.5" r="3.4" fill="none" stroke="#666" stroke-width="1.6"/></svg>
<div class="abs" style="left:988.5px;top:199.7px;width:50px;height:35.3px;border-radius:18px;background:#e3e3e3"></div>
<div class="t" style="left:1002.3px;top:207.9px;font-size:19.5px;line-height:19.5px;color:#1f1f1f;">All</div>
<div class="abs" style="left:1045.3px;top:199.7px;width:121.5px;height:35.3px;border-radius:18px;border:1px solid #c6c6c6"></div>
<svg class="abs" style="left:1052px;top:204.5px" width="26" height="26" viewBox="0 0 22 22"><use href="#cdlogo"/></svg>
<div class="t" style="left:1085.4px;top:207.9px;font-size:19.5px;line-height:19.5px;color:#1f1f1f;letter-spacing:0.25px">My files</div>
<div class="abs" style="left:1173.5px;top:199.7px;width:140.6px;height:35.6px;border-radius:18px;background:#3a76ce"></div>
<svg class="abs" style="left:1183px;top:208px" width="20" height="20" viewBox="0 0 20 20"><path d="M10 2 V18 M2 10 H18" stroke="#fff" stroke-width="2"/></svg>
<div class="t" style="left:1213.3px;top:208.1px;font-size:19.3px;line-height:19.3px;color:#fff;">New Drive</div>
<div class="abs" style="left:1496px;top:255px;width:24px;height:600px;background:#fafafa"></div>
<svg class="abs" style="left:1499px;top:260px" width="17" height="14" viewBox="0 0 17 14"><path d="M8.5 2.3 Q9 1.8 9.5 2.4 L14.5 10 Q15 11.5 13.5 11.5 H3.5 Q2 11.5 2.5 10 L7.5 2.4 Z" fill="#8a8a8a"/></svg>
<div class="abs" style="left:1500.7px;top:282.1px;width:13.2px;height:105.7px;border-radius:7px;background:#8a8a8a"></div>
<svg class="abs" style="left:1499px;top:835px" width="17" height="14" viewBox="0 0 17 14"><path d="M8.5 12.2 Q9 12.7 9.5 12.1 L14.5 4.5 Q15 3 13.5 3 H3.5 Q2 3 2.5 4.5 L7.5 12.1 Z" fill="#8a8a8a"/></svg>
<div class="t" style="left:988.8px;top:273.6px;font-size:17px;line-height:17px;color:#666;font-weight:bold;letter-spacing:0.4px">SYNCING</div>
<svg class="abs" style="left:986px;top:336px" width="50" height="40" viewBox="0 0 50 40"><defs><linearGradient id="gmon" x1="0" y1="0" x2="1" y2="1"><stop offset="0" stop-color="#66dbe8"/><stop offset="1" stop-color="#3a8bc6"/></linearGradient><radialGradient id="gdisc" cx="0.45" cy="0.35" r="0.7"><stop offset="0" stop-color="#f2f2f2"/><stop offset="0.6" stop-color="#dcdcdc"/><stop offset="1" stop-color="#b0b0b0"/></radialGradient></defs>
<rect x="5" y="1.8" width="37" height="17" fill="url(#gmon)"/><rect x="5" y="1.8" width="37" height="1.2" fill="#4a4f55"/>
<circle cx="14" cy="24.1" r="11.4" fill="url(#gdisc)"/><path d="M4 21 L11 23.5" stroke="#e8b8ec" stroke-width="0.6"/><path d="M17 22 L23 16.5" stroke="#c9f0c9" stroke-width="0.6"/>
<circle cx="14" cy="24.1" r="3.5" fill="#5b8fd8"/><circle cx="14" cy="24.1" r="1" fill="#3a6cb8"/>
<circle cx="36.3" cy="29.3" r="11.7" fill="#fff"/>
<path d="M30.5 37.9 Q26.4 37.9 26.4 33.6 Q26.4 29.8 30.3 29.4 Q31.6 24.4 36.2 24.4 Q40.6 24.4 41.7 28.8 Q47.2 29.3 47.2 33.3 Q47.2 37.9 42.5 37.9 Z" fill="#3a74cc"/>
<path d="M36.8 27.7 L40.4 31.5 H38.3 V35.6 H35.3 V31.5 H33.2 Z" fill="#fff"/>
</svg>
<div class="t" style="left:1048.6px;top:322.1px;font-size:21.5px;line-height:21.5px;color:#1f1f1f;-webkit-text-stroke:0.35px #1f1f1f;letter-spacing:0.2px">go1.25.5.windows-arm64.msi</div>
<div class="t" style="left:1048.6px;top:354.3px;font-size:18px;line-height:18px;color:#6b6b6b;letter-spacing:0.5px">30 MB / 51.7 MB - 3.6 MB/s</div>
<div class="abs" style="left:1048.6px;top:384.6px;width:422.8px;height:5.4px;border-radius:3px;background:#a8c5ea;overflow:hidden"><div style="width:243.6px;height:100%;background:#3a72cc"></div></div>
<svg class="abs" style="left:986px;top:445px" width="50" height="46" viewBox="0 0 50 46"><defs><linearGradient id="gring" x1="0" y1="0" x2="1" y2="1"><stop offset="0" stop-color="#f39a3a"/><stop offset="0.5" stop-color="#e06f6a"/><stop offset="1" stop-color="#9d4fc0"/></linearGradient></defs>
<path d="M10.5 5.5 H30.5 L37 12 V42 H10.5 Z" fill="#f6f7f8" stroke="#cfcfcf" stroke-width="1.2"/>
<path d="M30.5 5.5 V12 H37" fill="#e6e6e6" stroke="#cfcfcf" stroke-width="1.2"/>
<circle cx="23.3" cy="24.3" r="9.6" fill="url(#gring)"/><circle cx="23.3" cy="24.3" r="8" fill="#333"/>
<path d="M20.2 19.5 L28 24.3 L20.2 29.3 Z" fill="#ececec"/>
<circle cx="36.7" cy="37.4" r="12" fill="#fff"/>
<path d="M30.9 45 Q26.4 45 26.4 40.7 Q26.4 36.9 30.3 36.5 Q31.6 31.5 36.2 31.5 Q40.6 31.5 41.7 35.9 Q47.2 36.4 47.2 40.4 Q47.2 45 42.5 45 Z" fill="#3a74cc"/>
<path d="M36.8 34.8 L40.4 38.6 H38.3 V42.7 H35.3 V38.6 H33.2 Z" fill="#fff"/>
</svg>
<div class="t" style="left:1048.6px;top:438.1px;font-size:21.5px;line-height:21.5px;color:#1f1f1f;-webkit-text-stroke:0.35px #1f1f1f">Video Demo.mp4</div>
<div class="t" style="left:1048.6px;top:469.6px;font-size:18px;line-height:18px;color:#6b6b6b;letter-spacing:0.5px">30 MB / 352.6 MB - 4.1 MB/s</div>
<div class="abs" style="left:1048.6px;top:500.3px;width:422.8px;height:5.4px;border-radius:3px;background:#a8c5ea;overflow:hidden"><div style="width:32.7px;height:100%;background:#3a72cc"></div></div>
<div class="abs" style="left:963px;top:539px;width:533px;height:1px;background:#e0e0e0"></div>
<div class="t" style="left:988.8px;top:570.7px;font-size:17px;line-height:17px;color:#666;font-weight:bold;letter-spacing:0.4px">RECENT</div>
<svg class="abs" style="left:986px;top:620px" width="50" height="52" viewBox="0 0 50 52"><path d="M23.3 6 L44.1 26 L23.9 46.2 L2.5 25.4 Z" fill="#58ad56" stroke="#58ad56" stroke-width="1.5" stroke-linejoin="round"/>
<path d="M21.3 21.5 H27 M21.3 21.5 V30 M21.3 25.5 H26" stroke="#fff" stroke-width="1.6" fill="none"/>
<path d="M8.8 7 V13.5 M5.5 10.2 H12" stroke="#3e8fd6" stroke-width="2.6"/><path d="M8.8 8.2 V12.3 M6.8 10.2 H10.8" stroke="#6fe0b0" stroke-width="0.9"/>
<circle cx="36.7" cy="39.1" r="12.6" fill="#fff"/><circle cx="36.7" cy="39.1" r="8.7" fill="#438a3e"/>
<path d="M32.3 39.2 L35.5 42.3 L41.2 36.2" stroke="#fff" stroke-width="1.6" fill="none"/>
</svg>
<div class="t" style="left:1048.6px;top:620.2px;font-size:21.5px;line-height:21.5px;color:#1f1f1f;-webkit-text-stroke:0.35px #1f1f1f">FiddlerClassicAutoUpdater.exe</div>
<div class="t" style="left:1048.6px;top:652.5px;font-size:18px;line-height:18px;color:#6b6b6b;letter-spacing:0.5px">Just now <span style="position:relative;top:-1.6px">·</span> <span style="text-decoration:underline;text-underline-offset:2px">Work</span></div>
<svg class="abs" style="left:986px;top:726px" width="50" height="50" viewBox="0 0 50 50"><defs><linearGradient id="gsw" x1="0" y1="0" x2="0" y2="1"><stop offset="0" stop-color="#2d64d6"/><stop offset="1" stop-color="#12289a"/></linearGradient><linearGradient id="gsb" x1="0" y1="0" x2="1" y2="0.3"><stop offset="0" stop-color="#5fd0f5"/><stop offset="1" stop-color="#9b8cf2"/></linearGradient></defs>
<path d="M13 5 H32 Q38 5 38 11 V42.5 H9 V9 Q9 5 13 5 Z" fill="#f8f8f8" stroke="#cfcfcf" stroke-width="1.1"/>
<rect x="15.6" y="14" width="15.4" height="19.3" rx="2.5" fill="#2c52de"/><path d="M15.6 16.5 Q15.6 14 18 14 H28.5 Q31 14 31 16.5 V21 H15.6 Z" fill="url(#gsb)"/><rect x="15.6" y="21" width="15.4" height="6" fill="#4a88ea"/>
<rect x="3" y="25.2" width="18.8" height="18.8" rx="4" fill="#fff"/><rect x="4" y="26.2" width="16.8" height="17" rx="3.4" fill="url(#gsw)"/>
<path d="M7 29.5 H9.2 L10.4 36.3 L11.9 29.5 H13.6 L15.1 36.3 L16.3 29.5 H18.5 L16.2 40.3 H14.1 L12.7 34 L11.3 40.3 H9.2 Z" fill="#fff"/>
<circle cx="36.7" cy="37" r="12.6" fill="#fff"/><circle cx="36.7" cy="37" r="8.7" fill="#438a3e"/>
<path d="M32.3 37.1 L35.5 40.2 L41.2 34.1" stroke="#fff" stroke-width="1.6" fill="none"/>
</svg>
<div class="t" style="left:1048.6px;top:725.0px;font-size:21.5px;line-height:21.5px;color:#1f1f1f;-webkit-text-stroke:0.35px #1f1f1f">Meeting Notes V2.docx</div>
<div class="t" style="left:1048.6px;top:756.2px;font-size:18px;line-height:18px;color:#6b6b6b;letter-spacing:0.5px">1 minute ago <span style="position:relative;top:-1.6px">·</span> <span style="text-decoration:underline;text-underline-offset:2px">Work</span></div>
<div class="abs" style="left:963px;top:800px;width:533px;height:55px;overflow:hidden">
<svg class="abs" style="left:27px;top:38.5px" width="40" height="40" viewBox="0 0 40 40"><defs><linearGradient id="gpp" x1="0" y1="0" x2="1" y2="0"><stop offset="0" stop-color="#e0508a"/><stop offset="0.4" stop-color="#d9493f"/><stop offset="1" stop-color="#f5a040"/></linearGradient></defs>
<path d="M5 1 H29 Q37.5 1 37.5 9.5 V40 H0.8 V5 Q0.8 1 5 1 Z" fill="#f6f6f6" stroke="#cfcfcf" stroke-width="1.1"/>
<circle cx="19.3" cy="14.5" r="9" fill="url(#gpp)"/><path d="M19 5.5 V14.8 H28" fill="none" stroke="#c0392b" stroke-width="1" opacity="0.5"/>
</svg>
<div class="t" style="left:86.3px;top:28.4px;font-size:21.5px;line-height:21.5px;color:#1f1f1f;-webkit-text-stroke:0.35px #1f1f1f">Presentation.pptx</div>
</div>
<div class="abs" style="left:963px;top:855px;width:557px;height:1px;background:#dcdcdc"></div>
<svg class="abs" style="left:991px;top:870.3px" width="22" height="23" viewBox="0 0 22 23"><path d="M6 19.5 A8.3 8.3 0 1 1 16 20" fill="none" stroke="#3a78d0" stroke-width="2"/><path d="M10.5 16 L12.5 22.5 L17.5 20.5 Z" fill="#3a78d0"/></svg>
<div class="t" style="left:1028.0px;top:873.9px;font-size:18px;line-height:18px;color:#6b6b6b;letter-spacing:0.5px">Syncing 2 file(s)...</div>
</div>

</body></html>
